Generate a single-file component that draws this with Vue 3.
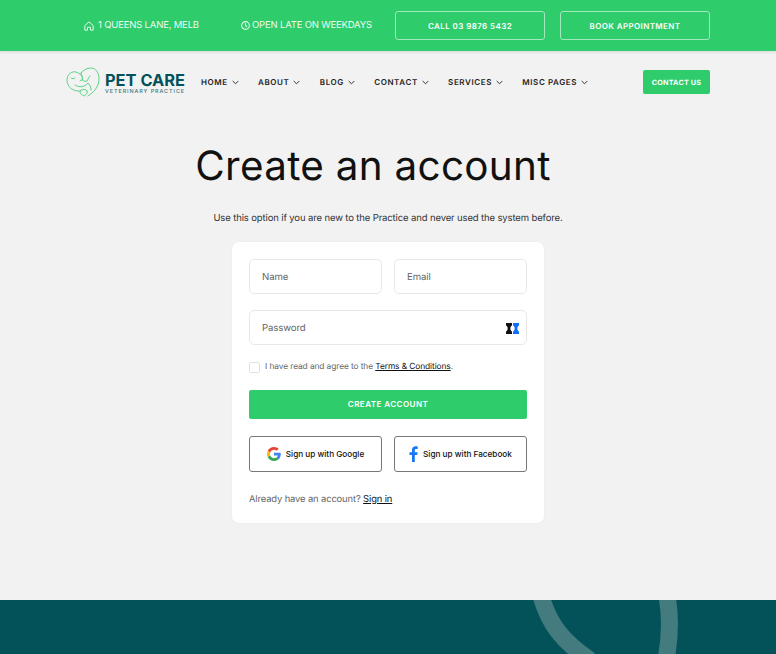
<template>
  <div class="page">
    <div class="topbar">
      <div class="info first">
        <svg width="10" height="10" viewBox="0 0 12 12" fill="none" stroke="#e6f9ed" stroke-width="1.2" stroke-linejoin="round"><path d="M1 5.500 6 1l5 4.500V11H7.800V7.500H4.200V11H1z" /></svg>
        <span>1 QUEENS LANE, MELB</span>
      </div>
      <div class="info second">
        <svg width="9" height="9" viewBox="0 0 10 10" fill="none" stroke="#e6f9ed" stroke-width="1.200"><circle cx="5" cy="5" r="4.300" /><path d="M5 2.500V5.300L6.800 6.300" /></svg>
        <span>OPEN LATE ON WEEKDAYS</span>
      </div>
      <a class="ghost call">CALL 03 9876 5432</a>
      <a class="ghost">BOOK APPOINTMENT</a>
    </div>

    <div class="nav">
      <div class="logo">
        <svg width="34" height="30" viewBox="0 0 34 30" fill="none" stroke="#5cd286" stroke-width="1" stroke-linecap="round" stroke-linejoin="round">
          <path d="M15 24C7 25 1 20 1 13 1 7 6 4 10 5c3 1 6 3 7 7l-3 2" />
          <path d="M15 6C17 3 21 1 25 1c5 0 8 5 8 11 0 8-6 14-11 17" />
          <path d="M15 6c1 3 2 5 1 7 2 1 4 2 5 1 1-1 1-3 3-5" />
          <path d="M5 11c1 1 3 1 4 0" />
          <path d="M9 18c4 3 10 2 13-2 2 2 3 4 3 7" />
          <path d="M21 24c-1-2-3-2-4-1-1-1-3 0-3 2s2 3 4 4c2-1 4-3 3-5z" />
        </svg>
        <div class="logo-text">
          <div class="logo-name">PET CARE</div>
          <div class="logo-sub">VETERINARY PRACTICE</div>
        </div>
      </div>
      <ul class="menu">
        <li v-for="item in menu" :key="item">
          {{ item }}
          <svg width="7" height="5" viewBox="0 0 7 5" fill="none" stroke="#333" stroke-width="1"><path d="M.7 1 3.500 3.800 6.300 1" /></svg>
        </li>
      </ul>
      <a class="contact">CONTACT US</a>
    </div>

    <main class="main">
      <h1>Create an account</h1>
      <p class="lead">Use this option if you are new to the Practice and never used the system before.</p>

      <form class="card" @submit.prevent>
        <div class="row">
          <div class="field">Name</div>
          <div class="field">Email</div>
        </div>
        <div class="field password">
          <span>Password</span>
          <svg width="13" height="11" viewBox="0 0 13 11">
            <path fill="#111" d="M0 0h6v2.200L4.400 4.200v2.600L6 8.800V11H0V8.800l1.600-2V4.200L0 2.200z" />
            <path fill="#0d6efd" d="M7 0h6v2.200l-1.600 2v2.600l1.600 2V11H7V8.800l1.600-2V4.200L7 2.200z" />
          </svg>
        </div>
        <label class="agree">
          <span class="check"></span>
          <span>I have read and agree to the <a>Terms &amp; Conditions</a>.</span>
        </label>
        <button class="create" type="button">CREATE ACCOUNT</button>
        <div class="row social">
          <button type="button">
            <svg width="14" height="14" viewBox="0 0 48 48">
              <path fill="#ea4335" d="M24 9.500c3.500 0 6.700 1.200 9.200 3.600l6.900-6.900C35.900 2.400 30.500 0 24 0 14.600 0 6.500 5.400 2.600 13.200l8 6.200C12.500 13.600 17.800 9.500 24 9.500z" />
              <path fill="#4285f4" d="M47 24.500c0-1.600-.1-3.100-.4-4.500H24v9h13c-.6 3-2.200 5.500-4.800 7.200l7.700 6C44.400 38 47 31.800 47 24.500z" />
              <path fill="#fbbc05" d="M10.500 28.600A14.500 14.500 0 0 1 10.500 19.400l-8-6.200a24 24 0 0 0 0 21.600z" />
              <path fill="#34a853" d="M24 48c6.500 0 11.900-2.100 15.900-5.800l-7.700-6c-2.200 1.400-4.900 2.300-8.200 2.300-6.200 0-11.500-4.200-13.400-9.900l-8 6.200C6.500 42.600 14.600 48 24 48z" />
            </svg>
            <span>Sign up with Google</span>
          </button>
          <button type="button">
            <svg width="9" height="16" viewBox="0 0 9 16"><path fill="#1877f2" d="M5.800 16V9h2.400l.4-2.800H5.800V4.400c0-.8.300-1.400 1.400-1.400H8.700V.4C8.300.3 7.500.2 6.600.2 4.500.2 3 1.500 3 3.900v2.300H.5V9H3v7z" /></svg>
            <span>Sign up with Facebook</span>
          </button>
        </div>
        <p class="signin">Already have an account? <a>Sign in</a></p>
      </form>
    </main>

    <footer class="footer">
      <svg class="arcs" width="776" height="54" viewBox="0 0 776 54" fill="none" stroke="#447b7f" stroke-width="17">
        <path d="M541-4C549 24 562 41 590 60" />
        <path d="M667-4C671 18 670 38 666 60" />
      </svg>
    </footer>
  </div>
</template>

<script setup>
const menu = ['HOME', 'ABOUT', 'BLOG', 'CONTACT', 'SERVICES', 'MISC PAGES']
</script>

<style>
html,
body {
  margin: 0;
  background: #f2f2f2;
}
</style>

<style scoped>
.page {
  width: 776px;
  height: 654px;
  overflow: hidden;
  display: flex;
  flex-direction: column;
  font-family: Inter, "Liberation Sans", sans-serif;
  color: #111;
  background: #f2f2f2;
  text-rendering: geometricPrecision;
}

.topbar {
  height: 51px;
  flex: none;
  box-sizing: border-box;
  display: flex;
  align-items: center;
  padding: 0 66px 0 84px;
  background: #2ecc6a;
  color: #eafaf0;
  font-size: 9.500px;
  letter-spacing: -0.18px;
  box-shadow: 0 1px 3px rgba(0, 0, 0, 0.12);
}

.info {
  display: flex;
  align-items: center;
  gap: 4px;
}

.first {
  width: 157px;
}

.second {
  width: 154px;
  gap: 2px;
}

.ghost {
  width: 150px;
  height: 29px;
  box-sizing: border-box;
  border: 1px solid #a2e8bc;
  border-radius: 3px;
  display: flex;
  align-items: center;
  justify-content: center;
  font-size: 8px;
  font-weight: 600;
  letter-spacing: 0.4px;
  color: #fff;
}

.call {
  margin-right: 15px;
}

.nav {
  height: 62px;
  flex: none;
  display: flex;
  align-items: center;
  padding: 0 66px;
}

.logo {
  display: flex;
  align-items: center;
  gap: 5px;
  width: 135px;
}

.logo-text {
  padding-top: 4px;
}

.logo-name {
  font-size: 16.400px;
  line-height: 17px;
  font-weight: 700;
  color: #03525a;
  white-space: nowrap;
}

.logo-sub {
  font-size: 5.400px;
  line-height: 7px;
  font-weight: 500;
  letter-spacing: 0.95px;
  color: #3d7479;
  white-space: nowrap;
}

.menu {
  list-style: none;
  margin: 0;
  padding: 0;
  display: flex;
  gap: 19.300px;
  flex: 1;
}

.menu li {
  display: flex;
  align-items: center;
  gap: 4px;
  font-size: 8px;
  font-weight: 600;
  letter-spacing: 0.6px;
  color: #222;
  white-space: nowrap;
}

.contact {
  width: 67px;
  height: 24px;
  border-radius: 2px;
  background: #2ecc6a;
  color: #fff;
  font-size: 7.200px;
  font-weight: 700;
  letter-spacing: 0.2px;
  display: flex;
  align-items: center;
  justify-content: center;
}

.main {
  flex: 1;
  display: flex;
  flex-direction: column;
  align-items: center;
}

h1 {
  margin: 26px 30px 0 0;
  font-size: 40.400px;
  line-height: 54px;
  font-weight: 400;
  letter-spacing: 0.3px;
  color: #111;
}

.lead {
  margin: 19px 0 0;
  font-size: 9.500px;
  letter-spacing: -0.13px;
  line-height: 14px;
  color: #333;
}

.card {
  width: 312px;
  height: 281px;
  margin-top: 16px;
  box-sizing: border-box;
  padding: 17px;
  border-radius: 7px;
  background: #fff;
  box-shadow: 0 0 3px rgba(0, 0, 0, 0.04);
}

.row {
  display: grid;
  grid-template-columns: 133px 133px;
  column-gap: 12px;
}

.field {
  height: 35px;
  box-sizing: border-box;
  padding: 1px 12px 0;
  border: 1px solid #e8e8e8;
  border-radius: 5px;
  display: flex;
  align-items: center;
  font-size: 9.600px;
  letter-spacing: -0.1px;
  color: #666;
}

.password {
  margin-top: 16px;
  justify-content: space-between;
  padding-right: 7px;
}

.agree {
  margin-top: 17px;
  height: 11px;
  display: flex;
  align-items: center;
  gap: 5px;
  font-size: 8.400px;
  letter-spacing: -0.1px;
  line-height: 9px;
  color: #666;
}

.check {
  width: 11px;
  height: 11px;
  box-sizing: border-box;
  border: 1px solid #e2e2e2;
  border-radius: 2px;
}

.agree a,
.signin a {
  color: #111;
  text-decoration: underline;
}

.create {
  display: block;
  width: 278px;
  height: 29px;
  margin-top: 17px;
  padding: 0 0 1px;
  border: 0;
  border-radius: 2px;
  background: #2ecc6a;
  color: #fff;
  font-family: inherit;
  font-size: 8.100px;
  font-weight: 600;
  letter-spacing: 0.4px;
}

.social {
  margin-top: 17px;
}

.social button {
  height: 36px;
  padding: 0;
  border: 1px solid #777;
  border-radius: 3px;
  background: #fff;
  color: #111;
  font-family: inherit;
  font-size: 8.200px;
  font-weight: 500;
  display: flex;
  align-items: center;
  justify-content: center;
  gap: 5px;
}

.signin {
  margin: 21px 0 0;
  font-size: 9.400px;
  letter-spacing: -0.12px;
  line-height: 14px;
  color: #666;
}

.footer {
  height: 54px;
  flex: none;
  position: relative;
  background: #03525a;
}

.arcs {
  position: absolute;
  left: 0;
  top: 0;
}
</style>
